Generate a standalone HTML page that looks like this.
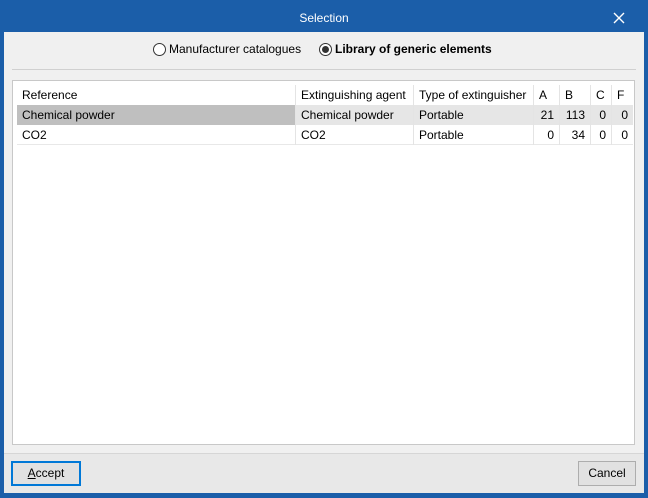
<!DOCTYPE html>
<html><head><style>
*{margin:0;padding:0;box-sizing:border-box}
body{width:648px;height:498px;background:#1b5ea9;font-family:"Liberation Sans",sans-serif;font-size:12px;color:#000;position:relative;overflow:hidden}
.title{position:absolute;left:0;top:0;width:648px;height:32px;color:#fff;text-align:center;line-height:36px;font-size:12px}
.x{position:absolute;left:613px;top:12px}
.body{position:absolute;left:4px;top:32px;width:640px;height:421px;background:#f0f0f0}
.foot{position:absolute;left:4px;top:453px;width:640px;height:40px;background:#e8e8e8;border-top:1px solid #d6d6d6}
.radio{position:absolute;top:42px;display:flex;align-items:center;gap:3px}
.rc{width:13px;height:13px;border:1px solid #333;border-radius:50%;background:#fff;position:relative}
.rc.on::after{content:"";position:absolute;left:2px;top:2px;width:7px;height:7px;border-radius:50%;background:#333}
.sep{position:absolute;left:12px;top:69px;width:624px;height:1px;background:#d0d0d0}
.tbl{position:absolute;left:12px;top:80px;width:623px;height:365px;background:#fff;border:1px solid #c8c8c8}
.row{position:absolute;left:4px;height:20px;width:616px}
.c{position:absolute;top:0;height:20px;line-height:20px;padding:0 5px;border-right:1px solid #e4e4e4;white-space:nowrap}
.r{text-align:right}
.btn{position:absolute;height:25px;line-height:23px;text-align:center;background:#e1e1e1;border:1px solid #adadad}
</style></head><body>
<div class="title">Selection</div>
<svg class="x" width="12" height="12" viewBox="0 0 12 12"><path d="M1 1L11 11M11 1L1 11" stroke="#fff" stroke-width="1.4"/></svg>
<div class="body"></div>
<div class="foot"></div>
<div class="radio" style="left:153px"><div class="rc"></div>Manufacturer catalogues</div>
<div class="radio" style="left:319px;font-weight:bold"><div class="rc on"></div>Library of generic elements</div>
<div class="sep"></div>
<div class="tbl">
<div class="row" style="top:4px">
<div class="c" style="left:0;width:279px">Reference</div>
<div class="c" style="left:279px;width:118px">Extinguishing agent</div>
<div class="c" style="left:397px;width:120px">Type of extinguisher</div>
<div class="c" style="left:517px;width:26px">A</div>
<div class="c" style="left:543px;width:31px">B</div>
<div class="c" style="left:574px;width:21px">C</div>
<div class="c" style="left:595px;width:21px;border:0">F</div>
</div>
<div class="row" style="top:24px;background:#e6e6e6">
<div class="c" style="left:0;width:279px;background:#bfbfbf">Chemical powder</div>
<div class="c" style="left:279px;width:118px">Chemical powder</div>
<div class="c" style="left:397px;width:120px">Portable</div>
<div class="c r" style="left:517px;width:26px">21</div>
<div class="c r" style="left:543px;width:31px">113</div>
<div class="c r" style="left:574px;width:21px">0</div>
<div class="c r" style="left:595px;width:21px;border:0">0</div>
</div>
<div class="row" style="top:44px;border-bottom:1px solid #e8e8e8">
<div class="c" style="left:0;width:279px">CO2</div>
<div class="c" style="left:279px;width:118px">CO2</div>
<div class="c" style="left:397px;width:120px">Portable</div>
<div class="c r" style="left:517px;width:26px">0</div>
<div class="c r" style="left:543px;width:31px">34</div>
<div class="c r" style="left:574px;width:21px">0</div>
<div class="c r" style="left:595px;width:21px;border:0">0</div>
</div>
</div>
<div class="btn" style="left:11px;top:461px;width:70px;border:2px solid #0078d7;line-height:21px"><u>A</u>ccept</div>
<div class="btn" style="left:578px;top:461px;width:58px">Cancel</div>
</body></html>
